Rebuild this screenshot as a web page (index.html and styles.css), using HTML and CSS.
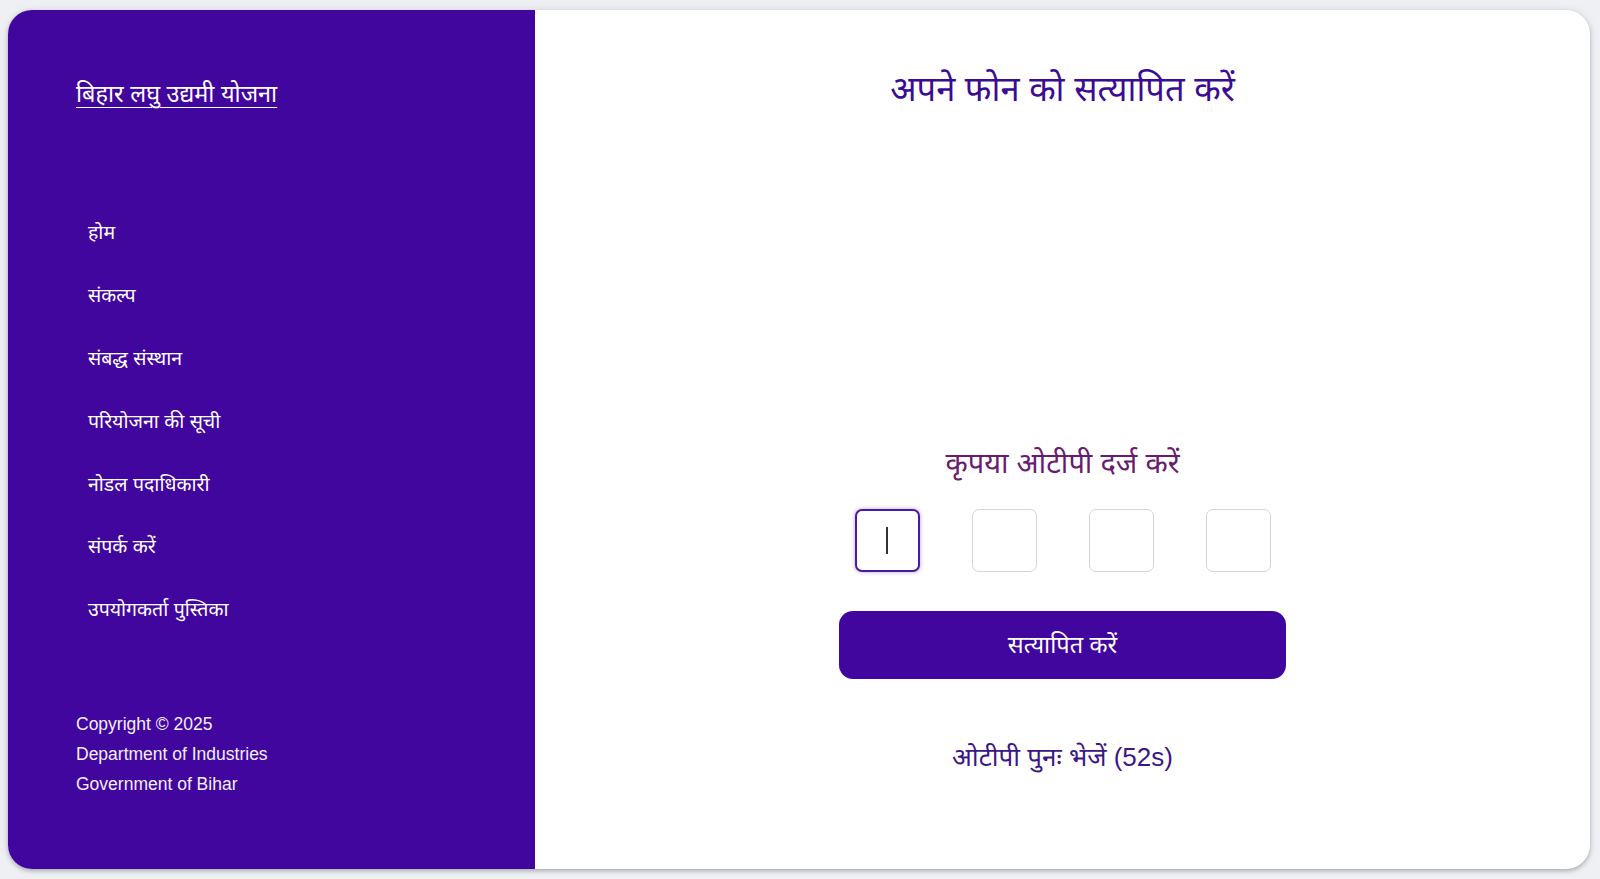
FILE: index.html
```html
<!DOCTYPE html>
<html lang="hi">
<head>
<meta charset="utf-8">
<title>बिहार लघु उद्यमी योजना</title>
<link rel="stylesheet" href="styles.css">
</head>
<body>
<div class="card">
  <aside class="sidebar">
    <a class="brand" href="#">बिहार लघु उद्यमी योजना</a>
    <nav class="nav">
      <a href="#">होम</a>
      <a href="#">संकल्प</a>
      <a href="#">संबद्ध संस्थान</a>
      <a href="#">परियोजना की सूची</a>
      <a href="#">नोडल पदाधिकारी</a>
      <a href="#">संपर्क करें</a>
      <a href="#">उपयोगकर्ता पुस्तिका</a>
    </nav>
    <div class="footer">
      <p>Copyright © 2025</p>
      <p>Department of Industries</p>
      <p>Government of Bihar</p>
    </div>
  </aside>
  <main class="main">
    <h1 class="title">अपने फोन को सत्यापित करें</h1>
    <section class="form">
      <h2 class="prompt">कृपया ओटीपी दर्ज करें</h2>
      <div class="otp-row">
        <div class="otp-box active"><span class="caret"></span></div>
        <div class="otp-box"></div>
        <div class="otp-box"></div>
        <div class="otp-box"></div>
      </div>
      <button class="verify">सत्यापित करें</button>
      <p class="resend">ओटीपी पुनः भेजें (52s)</p>
    </section>
  </main>
</div>
</body>
</html>
```

FILE: styles.css
```css
* { box-sizing: border-box; }
html, body { height: 100%; }
body {
  margin: 0;
  padding: 10px 10px 10px 8px;
  background: #eef0f4;
  font-family: "Liberation Sans", "Noto Sans", "Noto Sans Devanagari", Arial, sans-serif;
}
.card {
  display: flex;
  height: 859px;
  background: #ffffff;
  border-radius: 24px;
  box-shadow: 0 2px 4px rgba(0,0,0,0.25), 0 0 10px rgba(40,40,80,0.08);
  overflow: hidden;
}
.sidebar {
  width: 527px;
  flex: 0 0 527px;
  background: #41069d;
  color: #ffffff;
  display: flex;
  flex-direction: column;
  padding: 68px 0 70px 68px;
}
.brand {
  color: #ffffff;
  font-size: 23.5px;
  line-height: 32px;
  text-decoration: underline;
  text-underline-offset: 5px;
  text-decoration-thickness: 1px;
  align-self: flex-start;
}
.nav {
  display: flex;
  flex-direction: column;
  margin-top: 91px;
}
.nav a {
  color: #ffffff;
  text-decoration: none;
  font-size: 19.5px;
  line-height: 30px;
  padding: 16.4px 12px;
}
.footer {
  margin-top: auto;
}
.footer p {
  margin: 0;
  font-size: 17.5px;
  line-height: 30px;
  color: #f3eefc;
}
.main {
  flex: 1;
  display: flex;
  flex-direction: column;
  align-items: center;
  padding-top: 57px;
}
.title {
  margin: 0;
  font-size: 34.5px;
  line-height: 44px;
  font-weight: 400;
  color: #3a0c94;
}
.form {
  margin-top: 333px;
  display: flex;
  flex-direction: column;
  align-items: center;
}
.prompt {
  margin: 0;
  font-size: 29px;
  line-height: 38px;
  font-weight: 400;
  color: #6a1b6e;
}
.otp-row {
  display: flex;
  gap: 52px;
  margin-top: 27px;
}
.otp-box {
  width: 65px;
  height: 63px;
  border: 1px solid #d5d6dc;
  border-radius: 7px;
  display: flex;
  align-items: center;
  justify-content: center;
  background: #fff;
}
.otp-box.active {
  border: 2px solid #4a1aa0;
  box-shadow: 0 0 4px rgba(90, 40, 180, 0.45);
}
.caret {
  width: 1.5px;
  height: 27px;
  background: #333;
}
.verify {
  margin-top: 39px;
  width: 447px;
  height: 68px;
  border: none;
  border-radius: 14px;
  background: #41069d;
  color: #ffffff;
  font-family: inherit;
  font-size: 23.5px;
  padding: 0 0 2px;
}
.resend {
  margin: 61px 0 0;
  font-size: 26px;
  line-height: 34px;
  color: #3c1686;
}
```
